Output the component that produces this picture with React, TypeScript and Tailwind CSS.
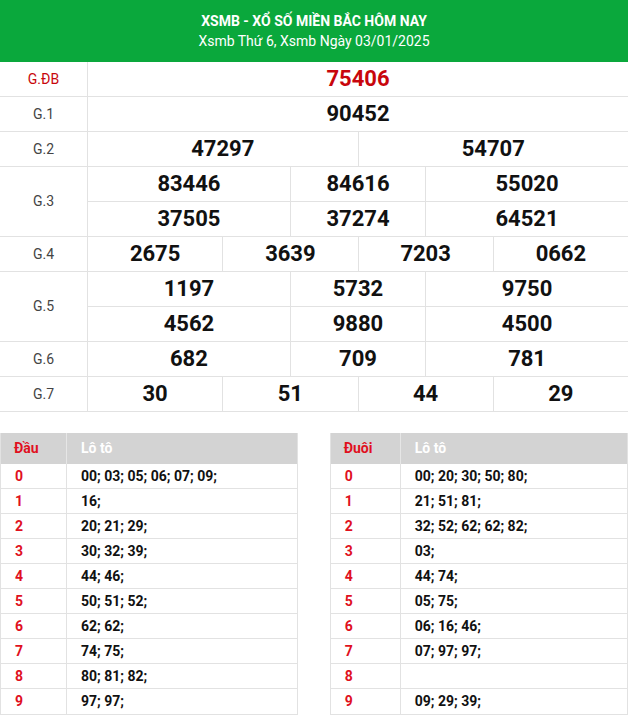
import React from "react";

const B = "border-[#e2e2e2]";

function Num({ v, span, red }: { v: string; span: string; red?: boolean }) {
  return (
    <div
      className={`${span} h-[35px] flex items-center justify-center border-l border-b ${B} text-[22px] font-bold leading-none ${red ? "text-[#c8060c]" : "text-[#111]"}`}
    >
      {v}
    </div>
  );
}

function Label({ t, rows, red }: { t: string; rows?: boolean; red?: boolean }) {
  return (
    <div
      className={`${rows ? "row-span-2" : ""} flex items-center justify-center border-b ${B} text-[14px] ${red ? "text-[#c8060c]" : "text-[#444]"}`}
    >
      {t}
    </div>
  );
}

const dau = [
  "00; 03; 05; 06; 07; 09;",
  "16;",
  "20; 21; 29;",
  "30; 32; 39;",
  "44; 46;",
  "50; 51; 52;",
  "62; 62;",
  "74; 75;",
  "80; 81; 82;",
  "97; 97;",
];
const duoi = [
  "00; 20; 30; 50; 80;",
  "21; 51; 81;",
  "32; 52; 62; 62; 82;",
  "03;",
  "44; 74;",
  "05; 75;",
  "06; 16; 46;",
  "07; 97; 97;",
  "",
  "09; 29; 39;",
];

function LoTable({ head, data, col }: { head: string; data: string[]; col: string }) {
  return (
    <div className={`w-[47.5%] border ${B} border-t-0`}>
      <div className="flex h-[31px] bg-[#d3d3d3] text-[14px] font-bold">
        <div className={`${col} flex items-center pl-[13px] text-[#e0101e] border-r border-[#e6e6e6]`}>{head}</div>
        <div className="flex-1 flex items-center pl-[14px] text-white">Lô tô</div>
      </div>
      {data.map((d, i) => (
        <div key={i} className={`flex h-[25px] text-[14px] font-bold ${i < data.length - 1 ? `border-b ${B}` : ""}`}>
          <div className={`${col} flex items-center pl-[14px] text-[#e0101e] border-r ${B}`}>{i}</div>
          <div className="flex-1 flex items-center pl-[14px] text-[#111]">{d}</div>
        </div>
      ))}
    </div>
  );
}

export default function App() {
  return (
    <div className="w-[628px] bg-white" style={{ fontFamily: "Roboto, 'Noto Sans', sans-serif" }}>
      <div className="h-[62px] bg-[#0aa83c] flex flex-col items-center justify-center text-white">
        <div className="text-[14px] font-bold leading-[20px]">XSMB - XỔ SỐ MIỀN BẮC HÔM NAY</div>
        <div className="text-[14px] leading-[20px]">Xsmb Thứ 6, Xsmb Ngày 03/01/2025</div>
      </div>

      <div className="grid grid-cols-[87px_repeat(8,1fr)]">
        <Label t="G.ĐB" red />
        <Num v="75406" span="col-span-8" red />

        <Label t="G.1" />
        <Num v="90452" span="col-span-8" />

        <Label t="G.2" />
        <Num v="47297" span="col-span-4" />
        <Num v="54707" span="col-span-4" />

        <Label t="G.3" rows />
        <Num v="83446" span="col-span-3" />
        <Num v="84616" span="col-span-2" />
        <Num v="55020" span="col-span-3" />
        <Num v="37505" span="col-span-3" />
        <Num v="37274" span="col-span-2" />
        <Num v="64521" span="col-span-3" />

        <Label t="G.4" />
        <Num v="2675" span="col-span-2" />
        <Num v="3639" span="col-span-2" />
        <Num v="7203" span="col-span-2" />
        <Num v="0662" span="col-span-2" />

        <Label t="G.5" rows />
        <Num v="1197" span="col-span-3" />
        <Num v="5732" span="col-span-2" />
        <Num v="9750" span="col-span-3" />
        <Num v="4562" span="col-span-3" />
        <Num v="9880" span="col-span-2" />
        <Num v="4500" span="col-span-3" />

        <Label t="G.6" />
        <Num v="682" span="col-span-3" />
        <Num v="709" span="col-span-2" />
        <Num v="781" span="col-span-3" />

        <Label t="G.7" />
        <Num v="30" span="col-span-2" />
        <Num v="51" span="col-span-2" />
        <Num v="44" span="col-span-2" />
        <Num v="29" span="col-span-2" />
      </div>

      <div className="flex justify-between mt-[21px]">
        <LoTable head="Đầu" data={dau} col="w-[66px]" />
        <LoTable head="Đuôi" data={duoi} col="w-[70px]" />
      </div>
    </div>
  );
}
